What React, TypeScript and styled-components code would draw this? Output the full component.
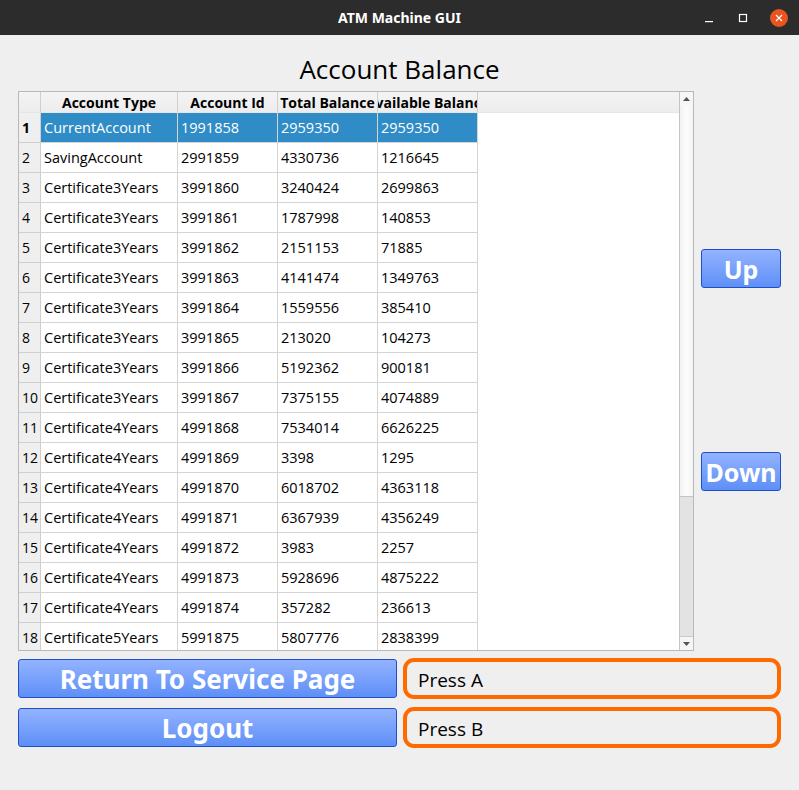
import React from "react";
import styled, { createGlobalStyle } from "styled-components";

const Global = createGlobalStyle`
  html, body { margin: 0; padding: 0; background: #efefef; }
  body { font-family: "Open Sans", "Noto Sans", "DejaVu Sans", sans-serif; }
  * { box-sizing: border-box; }
`;

const Window = styled.div`
  width: 799px;
  height: 790px;
  display: flex;
  flex-direction: column;
  background: #efefef;
  overflow: hidden;
`;

const TitleBar = styled.div`
  height: 35px;
  flex: none;
  background: #2c2c2c;
  display: flex;
  align-items: center;
  justify-content: center;
  position: relative;
  color: #ffffff;
  font-family: "Noto Sans", "Open Sans", sans-serif;
  font-weight: 700;
  font-size: 14px;
`;

const WinControls = styled.div`
  position: absolute;
  right: 11px;
  top: 0;
  height: 35px;
  display: flex;
  align-items: center;
  gap: 20px;
`;

const CtlIcon = styled.div`
  width: 14px;
  height: 14px;
  display: flex;
  align-items: center;
  justify-content: center;
`;

const CloseDot = styled.div`
  width: 18px;
  height: 18px;
  border-radius: 50%;
  background: #e95420;
  display: flex;
  align-items: center;
  justify-content: center;
`;

const Content = styled.div`
  flex: 1;
  display: flex;
  flex-direction: column;
  padding: 0 18px;
`;

const Heading = styled.div`
  height: 56px;
  display: flex;
  align-items: center;
  justify-content: center;
  padding-top: 12px;
  font-size: 26px;
  color: #000;
`;

const Middle = styled.div`
  height: 560px;
  display: flex;
  gap: 7px;
`;

const TableFrame = styled.div`
  width: 676px;
  height: 560px;
  border: 1px solid #b9b9b9;
  display: flex;
  background: #ffffff;
`;

const Viewport = styled.div`
  flex: 1;
  overflow: hidden;
  display: flex;
  flex-direction: column;
`;

const GridRow = styled.div<{ $head?: boolean }>`
  display: grid;
  grid-template-columns: 22px 137px 100px 100px 100px 1fr;
  height: ${(p) => (p.$head ? "21px" : "30px")};
  flex: none;
  background: ${(p) => (p.$head ? "linear-gradient(#f4f4f4, #ececec)" : "#ffffff")};
`;

const HeadCell = styled.div<{ $last?: boolean }>`
  display: flex;
  align-items: center;
  justify-content: center;
  overflow: hidden;
  white-space: nowrap;
  font-weight: 700;
  font-size: 14px;
  color: #000;
  border-right: ${(p) => (p.$last ? "none" : "1px solid #cfcfcf")};
  border-bottom: 1px solid #e6e6e6;
`;

const RowNum = styled.div<{ $sel?: boolean }>`
  display: flex;
  align-items: center;
  padding-left: 3px;
  background: #efefef;
  border-right: 1px solid #cfcfcf;
  border-bottom: 1px solid #cfcfcf;
  font-size: 14px;
  font-weight: ${(p) => (p.$sel ? 700 : 400)};
  color: #000;
`;

const Cell = styled.div<{ $sel?: boolean }>`
  display: flex;
  align-items: center;
  padding-left: 3px;
  white-space: nowrap;
  overflow: hidden;
  font-size: 14.5px;
  background: ${(p) => (p.$sel ? "#308cc6" : "#ffffff")};
  color: ${(p) => (p.$sel ? "#ffffff" : "#000000")};
  border-right: 1px solid #d4d4d4;
  border-bottom: 1px solid #d4d4d4;
`;

const Filler = styled.div``;

const ScrollBar = styled.div`
  width: 14px;
  border-left: 1px solid #c4c4c4;
  display: flex;
  flex-direction: column;
  background: #e3e3e3;
`;

const ArrowBtn = styled.div`
  height: 13px;
  flex: none;
  display: flex;
  align-items: center;
  justify-content: center;
  background: #f6f6f6;
`;

const Thumb = styled.div`
  height: 392px;
  flex: none;
  background: linear-gradient(90deg, #f2f2f2, #fcfcfc 50%, #f4f4f4);
  border-bottom: 1px solid #c4c4c4;
`;

const Track = styled.div`
  flex: 1;
  background: #e3e3e3;
  border-bottom: 1px solid #cacaca;
`;

const SideCol = styled.div`
  display: flex;
  flex-direction: column;
  padding-top: 158px;
  gap: 164px;
`;

const BlueButton = styled.button<{ $size?: number }>`
  font-family: "Noto Sans", "Open Sans", sans-serif;
  font-weight: 700;
  font-size: ${(p) => p.$size ?? 24}px;
  line-height: normal;
  color: #ffffff;
  background: linear-gradient(#93b3ff, #5e8ff7);
  border: 1px solid #1f4fc2;
  border-radius: 3px;
  display: flex;
  align-items: center;
  justify-content: center;
  padding: 1px 0 0;
  cursor: pointer;
`;

const SideButton = styled(BlueButton)`
  width: 80px;
  height: 39px;
`;

const Bottom = styled.div`
  margin-top: 7px;
  display: flex;
  flex-direction: column;
  gap: 8px;
`;

const BottomRow = styled.div`
  display: flex;
  align-items: center;
  gap: 6px;
  height: 41px;
`;

const WideButton = styled(BlueButton)`
  width: 379px;
  height: 39px;
`;

const PressBox = styled.div`
  width: 378px;
  height: 41px;
  border: 4px solid #ff6a00;
  border-radius: 11px;
  display: flex;
  align-items: center;
  padding-left: 11px;
  padding-top: 2px;
  font-size: 19px;
  color: #000;
`;

const rows: [string, string, string, string][] = [
  ["CurrentAccount", "1991858", "2959350", "2959350"],
  ["SavingAccount", "2991859", "4330736", "1216645"],
  ["Certificate3Years", "3991860", "3240424", "2699863"],
  ["Certificate3Years", "3991861", "1787998", "140853"],
  ["Certificate3Years", "3991862", "2151153", "71885"],
  ["Certificate3Years", "3991863", "4141474", "1349763"],
  ["Certificate3Years", "3991864", "1559556", "385410"],
  ["Certificate3Years", "3991865", "213020", "104273"],
  ["Certificate3Years", "3991866", "5192362", "900181"],
  ["Certificate3Years", "3991867", "7375155", "4074889"],
  ["Certificate4Years", "4991868", "7534014", "6626225"],
  ["Certificate4Years", "4991869", "3398", "1295"],
  ["Certificate4Years", "4991870", "6018702", "4363118"],
  ["Certificate4Years", "4991871", "6367939", "4356249"],
  ["Certificate4Years", "4991872", "3983", "2257"],
  ["Certificate4Years", "4991873", "5928696", "4875222"],
  ["Certificate4Years", "4991874", "357282", "236613"],
  ["Certificate5Years", "5991875", "5807776", "2838399"],
];

export default function App() {
  return (
    <>
      <Global />
      <Window>
        <TitleBar>
          ATM Machine GUI
          <WinControls>
            <CtlIcon>
              <svg width="10" height="10" viewBox="0 0 10 10">
                <rect x="1" y="8" width="8" height="1.2" fill="#fff" />
              </svg>
            </CtlIcon>
            <CtlIcon>
              <svg width="10" height="10" viewBox="0 0 10 10">
                <rect x="1.5" y="1.5" width="7" height="7" fill="none" stroke="#fff" strokeWidth="1.2" />
              </svg>
            </CtlIcon>
            <CloseDot>
              <svg width="8" height="8" viewBox="0 0 8 8">
                <path d="M1 1L7 7M7 1L1 7" stroke="#fff" strokeWidth="1.2" />
              </svg>
            </CloseDot>
          </WinControls>
        </TitleBar>
        <Content>
          <Heading>Account Balance</Heading>
          <Middle>
            <TableFrame>
              <Viewport>
                <GridRow $head>
                  <HeadCell />
                  <HeadCell>Account Type</HeadCell>
                  <HeadCell>Account Id</HeadCell>
                  <HeadCell>Total Balance</HeadCell>
                  <HeadCell>Available Balance</HeadCell>
                  <HeadCell $last />
                </GridRow>
                {rows.map((r, i) => (
                  <GridRow key={i}>
                    <RowNum $sel={i === 0}>{i + 1}</RowNum>
                    {r.map((c, j) => (
                      <Cell key={j} $sel={i === 0}>
                        {c}
                      </Cell>
                    ))}
                    <Filler />
                  </GridRow>
                ))}
              </Viewport>
              <ScrollBar>
                <ArrowBtn>
                  <svg width="7" height="4" viewBox="0 0 7 4">
                    <path d="M0 4L3.5 0L7 4Z" fill="#555" />
                  </svg>
                </ArrowBtn>
                <Thumb />
                <Track />
                <ArrowBtn>
                  <svg width="7" height="4" viewBox="0 0 7 4">
                    <path d="M0 0L3.5 4L7 0Z" fill="#555" />
                  </svg>
                </ArrowBtn>
              </ScrollBar>
            </TableFrame>
            <SideCol>
              <SideButton $size={25}>Up</SideButton>
              <SideButton $size={25}>Down</SideButton>
            </SideCol>
          </Middle>
          <Bottom>
            <BottomRow>
              <WideButton $size={26}>Return To Service Page</WideButton>
              <PressBox>Press A</PressBox>
            </BottomRow>
            <BottomRow>
              <WideButton $size={26}>Logout</WideButton>
              <PressBox>Press B</PressBox>
            </BottomRow>
          </Bottom>
        </Content>
      </Window>
    </>
  );
}
